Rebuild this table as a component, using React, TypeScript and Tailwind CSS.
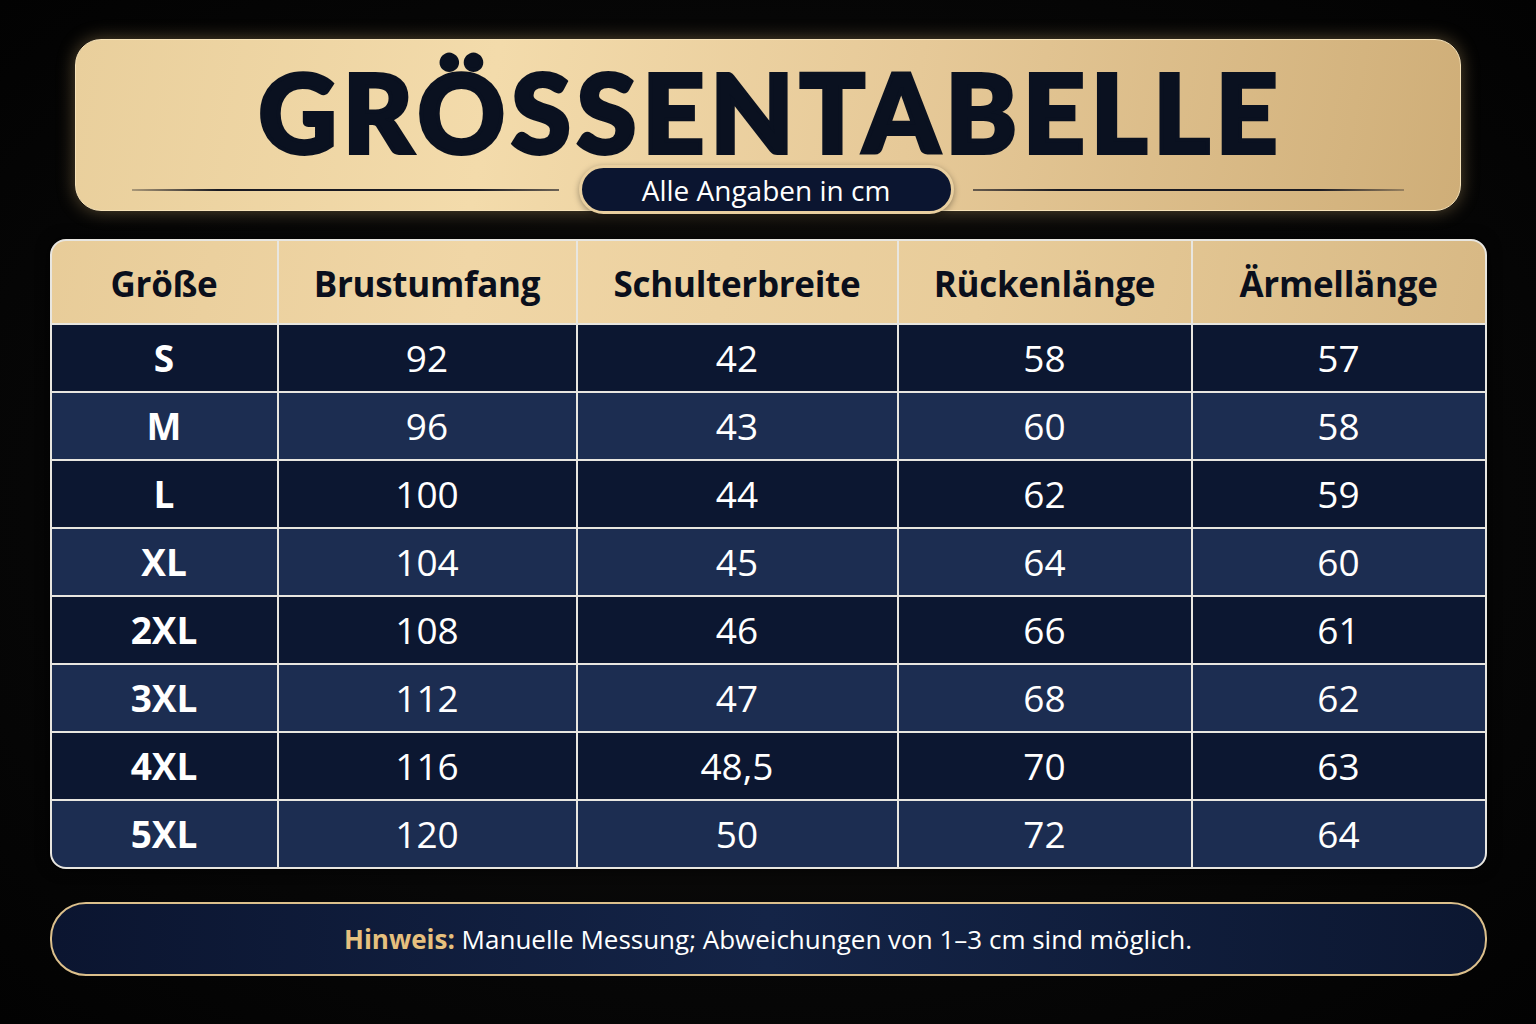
import React from 'react';

const COLS = ['Größe', 'Brustumfang', 'Schulterbreite', 'Rückenlänge', 'Ärmellänge'];

const ROWS: string[][] = [
  ['S', '92', '42', '58', '57'],
  ['M', '96', '43', '60', '58'],
  ['L', '100', '44', '62', '59'],
  ['XL', '104', '45', '64', '60'],
  ['2XL', '108', '46', '66', '61'],
  ['3XL', '112', '47', '68', '62'],
  ['4XL', '116', '48,5', '70', '63'],
  ['5XL', '120', '50', '72', '64'],
];

const GOLD = 'bg-[linear-gradient(100deg,#e9cf9c_0%,#f3dbab_30%,#e6c998_60%,#cfae78_100%)]';

export default function App() {
  return (
    <div
      className="w-[1536px] h-[1024px] overflow-hidden bg-[radial-gradient(ellipse_at_center,#15120e_0%,#070707_60%,#020202_100%)] flex flex-col items-center pt-[39px]"
      style={{ fontFamily: '"Open Sans", "Noto Sans", sans-serif' }}
    >
      {/* Title plate */}
      <div
        className={`w-[1386px] h-[172px] rounded-[26px] ${GOLD} shadow-[0_0_18px_rgba(240,200,130,0.35)] border border-[#f6e2b8] flex flex-col items-center`}
      >
        <h1
          className="mt-[23px] pl-[6px] text-[108px] leading-[96px] font-black tracking-[6px] text-[#0a1120] [-webkit-text-stroke:4px_#0a1120]"
          style={{ fontFamily: 'Lato, "Noto Sans", sans-serif' }}
        >
          GRÖSSENTABELLE
        </h1>
        <div className="mt-auto mb-[-4px] w-full flex items-center justify-between px-[56px]">
          <div className="w-[427px] h-[2px] bg-[linear-gradient(90deg,rgba(20,20,30,0.3),#1a1a22_20%,#1a1a22_80%,rgba(20,20,30,0.6))]" />
          <div className="h-[49px] w-[375px] rounded-full bg-[#0b1530] border-[3px] border-[#e9cf9f] shadow-[0_2px_6px_rgba(0,0,0,0.35)] flex items-center justify-center">
            <span className="text-[28px] text-white leading-none">Alle Angaben in cm</span>
          </div>
          <div className="w-[431px] h-[2px] bg-[linear-gradient(90deg,rgba(20,20,30,0.6),#1a1a22_20%,#1a1a22_80%,rgba(20,20,30,0.3))]" />
        </div>
      </div>

      {/* Size table */}
      <div className="mt-[28px] w-[1437px] rounded-[16px] border-2 border-[#e8e6e0] bg-[#e8e6e0] overflow-hidden shadow-[0_0_14px_rgba(0,0,0,0.8)] grid grid-cols-[225px_297px_319px_292px_292px] gap-[2px]">
        {COLS.map((c) => (
          <div
            key={c}
            className="h-[82px] bg-fixed bg-[linear-gradient(100deg,#e6ca96_0%,#f0d6a6_30%,#e8cc9a_60%,#d2b27d_100%)] flex items-center justify-center pt-[4px] text-[35px] font-bold text-[#0a0f1c] tracking-[-0.3px]"
          >
            {c}
          </div>
        ))}
        {ROWS.map((row, i) =>
          row.map((cell, j) => (
            <div
              key={`${i}-${j}`}
              className={`h-[66px] flex items-center justify-center text-white text-[37px] ${
                i % 2 === 0 ? 'bg-[#0c1731]' : 'bg-[#1c2d51]'
              } ${j === 0 ? 'font-bold' : 'font-normal'}`}
            >
              {cell}
            </div>
          ))
        )}
      </div>

      {/* Note */}
      <div className="mt-[33px] w-[1437px] h-[74px] rounded-[36px] border-2 border-[#dcc08c] bg-[linear-gradient(90deg,#0b1530,#142447_50%,#0c1731)] flex items-center justify-center">
        <p className="text-[26px] text-white leading-none">
          <span className="font-bold text-[#e6c07e]">Hinweis:</span> Manuelle Messung; Abweichungen von 1–3 cm sind möglich.
        </p>
      </div>
    </div>
  );
}
